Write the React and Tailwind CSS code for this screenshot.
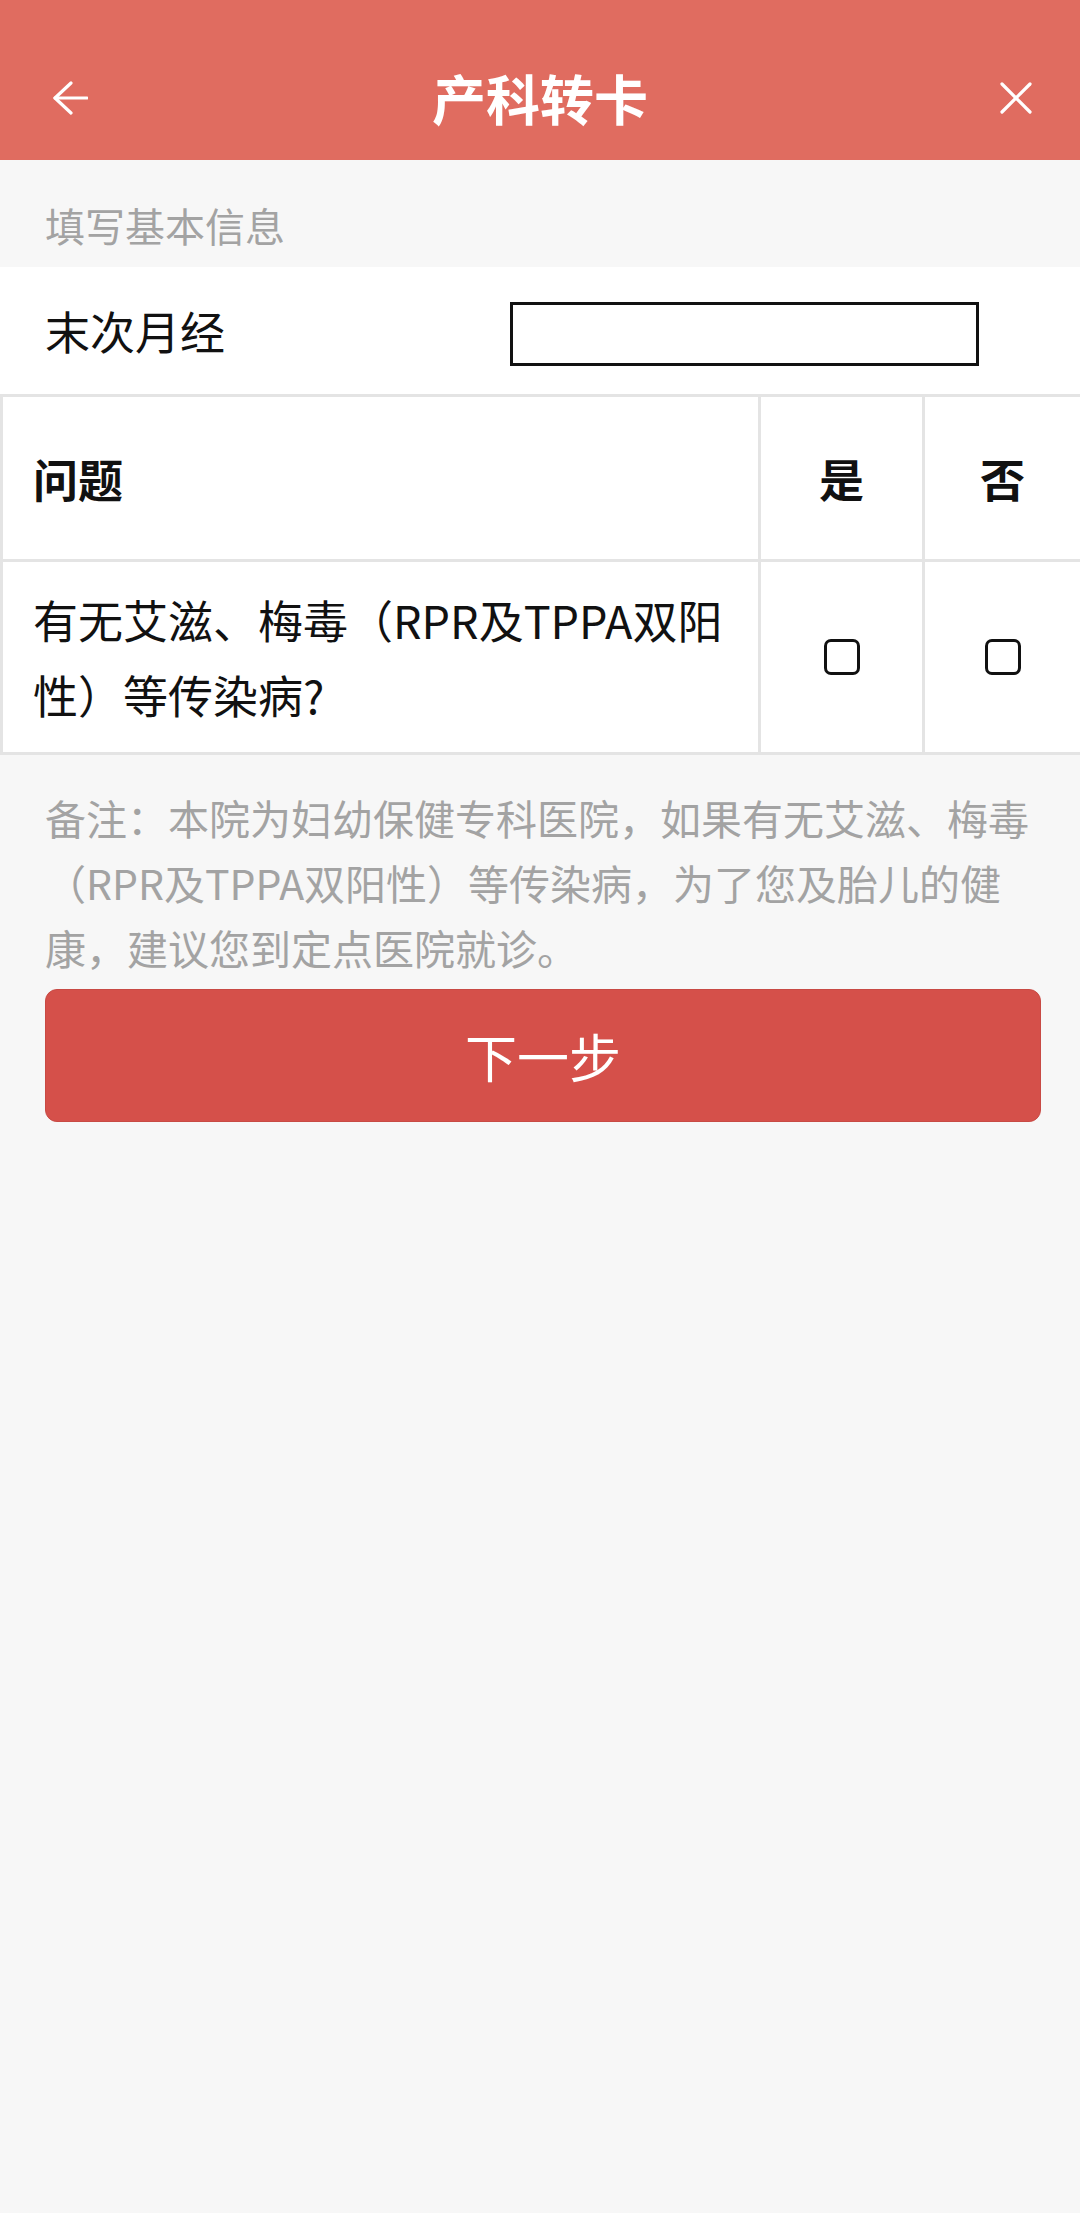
import React, { useState } from 'react';

const font = { fontFamily: '"Noto Sans CJK SC", "Noto Sans", sans-serif' };

const Checkbox = ({ checked, onChange }) => (
  <button
    onClick={onChange}
    className="w-[36px] h-[36px] border-[3px] border-[#111] rounded-[7px] bg-white flex items-center justify-center"
  >
    {checked && <span className="w-[16px] h-[16px] rounded-[3px] bg-[#111]" />}
  </button>
);

const App = () => {
  const [answer, setAnswer] = useState(null);

  return (
    <div
      className="min-h-screen bg-[#f7f7f7] text-[#111]"
      style={font}
    >
      {/* Header */}
      <div className="h-[160px] bg-[#e06c60] pt-[36px]">
        <div className="h-[124px] flex items-center justify-between pl-[52px] pr-[48px] relative">
          <svg width="36" height="34" viewBox="0 0 36 34" fill="none" stroke="white" strokeWidth="3.2" strokeLinecap="round" strokeLinejoin="round">
            <path d="M19 2 L3 17 L19 32" />
            <path d="M3 17 H35" />
          </svg>
          <h1 className="absolute left-0 right-0 text-center text-white text-[54px] font-bold leading-none pointer-events-none">
            产科转卡
          </h1>
          <svg width="32" height="32" viewBox="0 0 32 32" fill="none" stroke="white" strokeWidth="3.2" strokeLinecap="round">
            <path d="M2 2 L30 30" />
            <path d="M30 2 L2 30" />
          </svg>
        </div>
      </div>

      {/* Section title */}
      <div className="h-[107px] pt-[45px] px-[45px]">
        <p className="text-[40px] leading-[40px] text-[#a3a3a3]">填写基本信息</p>
      </div>

      {/* Last period row */}
      <div className="h-[127px] bg-white flex items-center pl-[45px]">
        <span className="text-[45px] leading-none w-[465px]">末次月经</span>
        <input
          type="text"
          className="w-[469px] h-[64px] border-[3px] border-[#111] bg-white outline-none px-2 text-[40px] mt-[6px]"
        />
      </div>

      {/* Question table */}
      <div className="bg-white border-t-[3px] border-l-[3px] border-[#e4e4e4] grid grid-cols-[758px_164px_1fr]">
        <div className="h-[165px] border-r-[3px] border-b-[3px] border-[#e4e4e4] flex items-center pl-[30px]">
          <span className="text-[45px] font-bold leading-none">问题</span>
        </div>
        <div className="h-[165px] border-r-[3px] border-b-[3px] border-[#e4e4e4] flex items-center justify-center">
          <span className="text-[45px] font-bold leading-none">是</span>
        </div>
        <div className="h-[165px] border-b-[3px] border-[#e4e4e4] flex items-center justify-center">
          <span className="text-[45px] font-bold leading-none">否</span>
        </div>

        <div className="h-[193px] border-r-[3px] border-b-[3px] border-[#e4e4e4] flex items-center pl-[30px] pr-[6px]">
          <p className="text-[45px] leading-[75px]">有无艾滋、梅毒（RPR及TPPA双阳性）等传染病?</p>
        </div>
        <div className="h-[193px] border-r-[3px] border-b-[3px] border-[#e4e4e4] flex items-center justify-center">
          <Checkbox checked={answer === 'yes'} onChange={() => setAnswer(answer === 'yes' ? null : 'yes')} />
        </div>
        <div className="h-[193px] border-b-[3px] border-[#e4e4e4] flex items-center justify-center">
          <Checkbox checked={answer === 'no'} onChange={() => setAnswer(answer === 'no' ? null : 'no')} />
        </div>
      </div>

      {/* Note */}
      <div className="px-[45px] pt-[30px]">
        <p className="text-[41px] leading-[65px] text-[#a3a3a3]">
          备注：本院为妇幼保健专科医院，如果有无艾滋、梅毒（RPR及TPPA双阳性）等传染病，为了您及胎儿的健康，建议您到定点医院就诊。
        </p>
        <button className="mt-[9px] w-[996px] h-[133px] rounded-[12px] bg-[#d5504a] border border-[#c84a44] text-white text-[52px] leading-none">
          下一步
        </button>
      </div>
    </div>
  );
};

export default App;
